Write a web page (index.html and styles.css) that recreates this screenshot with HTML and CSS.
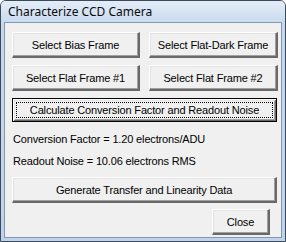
FILE: index.html
```html
<!DOCTYPE html>
<html>
<head>
<meta charset="utf-8">
<link rel="stylesheet" href="styles.css">
</head>
<body>
<div class="window">
  <div class="titlebar">Characterize CCD Camera</div>
  <div class="frame">
    <div class="content">
      <div class="row">
        <button class="btn half">Select Bias Frame</button>
        <button class="btn half">Select Flat-Dark Frame</button>
      </div>
      <div class="row">
        <button class="btn half">Select Flat Frame #1</button>
        <button class="btn half">Select Flat Frame #2</button>
      </div>
      <button class="btn wide focused"><span class="focus">Calculate Conversion Factor and Readout Noise</span></button>
      <div class="label first">Conversion Factor = 1.20 electrons/ADU</div>
      <div class="label">Readout Noise = 10.06 electrons RMS</div>
      <button class="btn wide gen">Generate Transfer and Linearity Data</button>
      <div class="footer">
        <button class="btn close">Close</button>
      </div>
    </div>
  </div>
</div>
</body>
</html>
```

FILE: styles.css
```css
* { box-sizing: border-box; }
html, body { margin: 0; padding: 0; background: #ffffff; }
.window {
  width: 286px;
  height: 242px;
  border: 1px solid #3c4a5c;
  border-radius: 6px 6px 0 0;
  background: linear-gradient(to bottom, #dce8f6 0px, #c5d8ee 22px, #bfd4ec 100%);
  display: flex;
  flex-direction: column;
  overflow: hidden;
}
.titlebar {
  height: 21px;
  padding: 3px 0 0 7px;
  font-family: "Noto Sans", sans-serif;
  font-size: 12px;
  line-height: 16px;
  color: #0a0a0a;
  background: linear-gradient(to bottom, #e4edf8 0%, #c9dbef 100%);
}
.frame {
  flex: 1;
  padding: 0 3px 3px 3px;
  display: flex;
}
.content {
  flex: 1;
  background: #f0f0f0;
  border: 1px solid #8397ad;
  padding: 9px 3px 0 7px;
  display: flex;
  flex-direction: column;
  font-family: "Liberation Sans", Arial, sans-serif;
  font-size: 11px;
  letter-spacing: -0.15px;
  color: #000;
}
.row {
  display: flex;
  gap: 9px;
  margin-bottom: 7px;
}
.btn {
  font-family: "Liberation Sans", Arial, sans-serif;
  font-size: 11px;
  letter-spacing: -0.15px;
  color: #000;
  background: #f0f0f0;
  height: 26px;
  padding: 0;
  margin: 0;
  border-style: solid;
  border-width: 1px 2px 2px 1px;
  border-color: #ffffff #696969 #696969 #ffffff;
  box-shadow: inset -1px -1px 0 #a0a0a0, inset 1px 1px 0 #e3e3e3;
  border-radius: 0;
}
.half { width: 128px; }
.row .half:last-child { width: 129px; }
.wide { width: 265px; }
.focused {
  height: 24px;
  border: 1px solid #000;
  box-shadow: inset 1px 1px 0 #ffffff, inset -1px -1px 0 #696969, inset 2px 2px 0 #e3e3e3, inset -2px -2px 0 #a0a0a0;
  padding: 3px;
  display: flex;
}
.focus {
  flex: 1;
  border: 1px dotted #000;
  display: flex;
  align-items: center;
  justify-content: center;
}
.label {
  height: 22px;
  line-height: 22px;
  padding-left: 1px;
}
.label.first { margin-top: 6px; }
.gen { margin-top: 5px; }
.footer {
  display: flex;
  justify-content: flex-end;
  margin-top: 6px;
  padding-right: 8px;
}
.close { width: 58px; }
```
